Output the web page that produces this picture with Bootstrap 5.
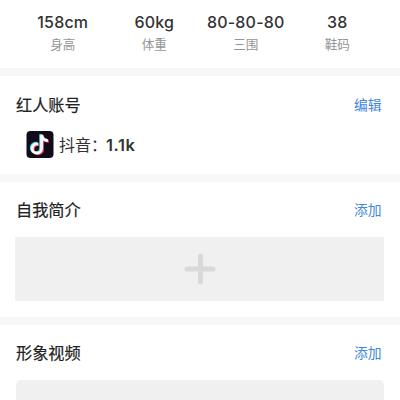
<!DOCTYPE html>
<html lang="zh-CN">
<head>
<meta charset="utf-8">
<meta name="viewport" content="width=device-width, initial-scale=1">
<title>红人资料</title>
<link href="https://cdn.jsdelivr.net/npm/bootstrap@5.3.0/dist/css/bootstrap.min.css" rel="stylesheet">
<style>
body{font-family:"Noto Sans CJK SC",sans-serif;color:#333;background:#fff}
.stats{height:68px;padding:11px 17px 0}
.stat-value{font:500 16px/22px Inter,"Noto Sans CJK SC",sans-serif;letter-spacing:.2px;white-space:nowrap}
.stat-label{font-size:12.6px;line-height:20px;color:#959595;margin-top:1px}
.panel{border-top:8px solid #f7f7f7;padding:15px 16px 0}
.panel-account{height:106px;padding-top:16px}
.panel-intro{height:143px}
.panel-video{height:83px}
.panel-title{font-size:16.2px;line-height:24px;font-weight:400;color:#222;-webkit-text-stroke:.2px #222}
.panel-action{font-size:13.8px;line-height:24px;color:#3f86e0;margin-right:2.5px}
.account{margin:14px 0 0 10px;font-size:16px;line-height:28px;gap:5px}
.account b{font-family:Inter,sans-serif;font-weight:600;font-size:16.5px;letter-spacing:.6px;margin-left:-1px}
.add-box{height:64px;margin:16px 0 0 -1px;background:#f0f0f0}
.video-box{height:20px;margin-top:16px;background:#f0f0f0;border-radius:5px 5px 0 0}
</style>
</head>
<body>
<main>
<section class="stats row g-0 text-center">
<div class="col"><div class="stat-value">158cm</div><div class="stat-label">身高</div></div>
<div class="col"><div class="stat-value">60kg</div><div class="stat-label">体重</div></div>
<div class="col"><div class="stat-value">80-80-80</div><div class="stat-label">三围</div></div>
<div class="col"><div class="stat-value">38</div><div class="stat-label">鞋码</div></div>
</section>
<section class="panel panel-account">
<div class="d-flex justify-content-between"><h2 class="panel-title mb-0">红人账号</h2><a class="panel-action text-decoration-none">编辑</a></div>
<div class="account d-flex align-items-start">
<svg width="28" height="28" viewBox="0 -.5 28 28" aria-hidden="true">
<rect x=".5" y=".5" width="27" height="27" rx="4" fill="#120b1a"/>
<g fill="none" stroke-width="2.8">
<path d="M15.6 4.3V18a4.7 4.7 0 1 1-4.7-4.7h1.2M15.6 4.3c.4 3.6 2.8 5.6 6.3 5.8" stroke="#35e3e0" transform="translate(-1 -.6)"/>
<path d="M15.6 4.3V18a4.7 4.7 0 1 1-4.7-4.7h1.2M15.6 4.3c.4 3.6 2.8 5.6 6.3 5.8" stroke="#f43b5d" transform="translate(1 .7)"/>
<path d="M15.6 4.3V18a4.7 4.7 0 1 1-4.7-4.7h1.2M15.6 4.3c.4 3.6 2.8 5.6 6.3 5.8" stroke="#fff"/>
</g>
</svg>
<div>抖音：<b>1.1k</b></div>
</div>
</section>
<section class="panel panel-intro">
<div class="d-flex justify-content-between"><h2 class="panel-title mb-0">自我简介</h2><a class="panel-action text-decoration-none">添加</a></div>
<div class="add-box d-flex align-items-center justify-content-center">
<svg width="32" height="32" viewBox="0 0 32 32" fill="none" stroke="#d9d9d9" stroke-width="5" stroke-linecap="round" aria-hidden="true"><path d="M3 16h26M16.5 3v26"/></svg>
</div>
</section>
<section class="panel panel-video">
<div class="d-flex justify-content-between"><h2 class="panel-title mb-0">形象视频</h2><a class="panel-action text-decoration-none">添加</a></div>
<div class="video-box"></div>
</section>
</main>
<script src="https://cdn.jsdelivr.net/npm/bootstrap@5.3.0/dist/js/bootstrap.bundle.min.js"></script>
</body>
</html>
